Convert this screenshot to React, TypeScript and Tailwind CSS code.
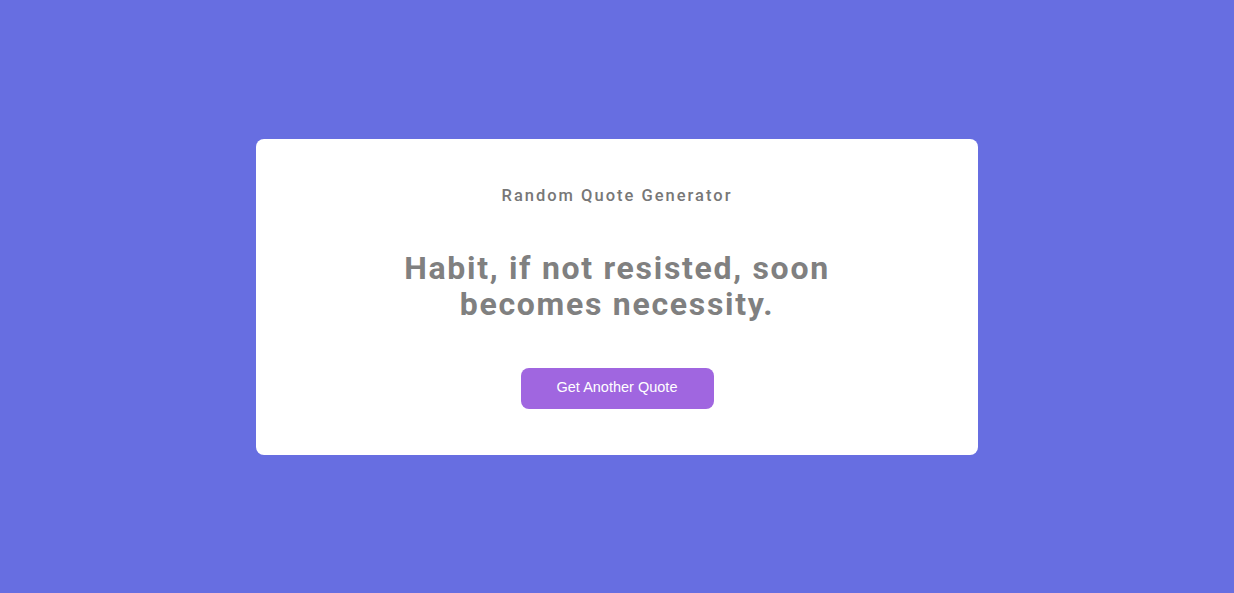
import React from 'react';

export default function App() {
  return (
    <div className="min-h-screen w-full bg-[#676ee1] flex items-center justify-center" style={{ minHeight: 593 }}>
      <div className="w-[722px] h-[316px] bg-white rounded-lg flex flex-col items-center pt-[45px] font-['Roboto',sans-serif]">
        {/* Heading */}
        <h1 className="text-[16.5px] leading-6 font-medium tracking-[2px] text-[#777777]">
          Random Quote Generator
        </h1>

        {/* Quote */}
        <p className="mt-[42px] max-w-[470px] text-center text-[32px] leading-[36px] font-bold tracking-[1.7px] text-[#808080]">
          Habit, if not resisted, soon becomes necessity.
        </p>

        <button className="mt-[46px] w-[193px] h-[41px] rounded-lg bg-[#a066e0] text-white text-[14.5px] font-['Liberation_Sans',Arial,sans-serif]">
          Get Another Quote
        </button>
      </div>
    </div>
  );
}
